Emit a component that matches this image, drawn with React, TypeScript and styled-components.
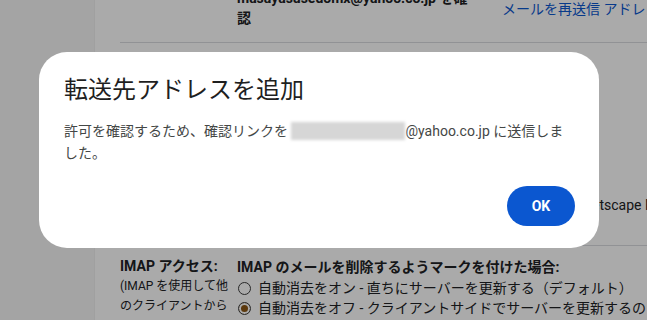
import React from 'react'
import styled, { createGlobalStyle } from 'styled-components'

const GlobalStyle = createGlobalStyle`
  html, body {
    margin: 0;
    padding: 0;
    width: 647px;
    height: 320px;
    overflow: hidden;
    background: #fff;
  }
  body {
    font-family: Roboto, "Noto Sans CJK JP", sans-serif;
    color: #1f1f1f;
  }
`

const Page = styled.div`
  display: flex;
  width: 647px;
  height: 320px;
  overflow: hidden;
`

const Nav = styled.nav`
  width: 94px;
  flex: none;
  background: #f7f7f7;
  border-right: 1px solid #f0f0f0;
`

const Content = styled.main`
  flex: 1;
  min-width: 0;
  padding-left: 25px;
  margin-top: -12px;
  font-size: 14px;
  line-height: 20px;
`

const Row = styled.div<{ $cols?: string }>`
  display: grid;
  grid-template-columns: ${(p) => p.$cols || '117px 1fr'};
  align-items: start;
`

const Strong = styled.div<{ $lh?: number }>`
  font-weight: 700;
  color: #202124;
  line-height: ${(p) => p.$lh || 20}px;
`

const Link = styled.a`
  color: #0b57d0;
  text-decoration: none;
  white-space: nowrap;
  padding-left: 25px;
  padding-top: 11px;
`

const Divider = styled.hr`
  margin: 0;
  border: 0;
  border-top: 1px solid #dadce0;
`

const Spacer = styled.div<{ $h: number }>`
  height: ${(p) => p.$h}px;
`

const Middle = styled.div`
  height: 202px;
  display: flex;
  flex-direction: column;
  justify-content: flex-end;
  padding-bottom: 30px;
  box-sizing: border-box;
  overflow: hidden;
`

const Plain = styled.div<{ $indent: number }>`
  white-space: nowrap;
  color: #202124;
  padding-left: ${(p) => p.$indent}px;
`

const Small = styled.div`
  font-size: 12px;
  line-height: 20px;
  color: #202124;
`

const Options = styled.div`
  display: flex;
  flex-direction: column;
`

const Option = styled.label`
  display: flex;
  align-items: center;
  gap: 7px;
  white-space: nowrap;
  height: 20px;
  color: #202124;
`

const Radio = styled.span<{ $checked?: boolean }>`
  width: 11px;
  height: 11px;
  margin-left: 1px;
  border-radius: 50%;
  border: 1.5px solid #3c3c3c;
  flex: none;
  box-sizing: content-box;
  background: ${(p) => (p.$checked ? '#fff' : 'transparent')};
  box-shadow: ${(p) => (p.$checked ? 'inset 0 0 0 2px #fff, inset 0 0 0 6px #8a5614' : 'none')};
`

const ImapSection = styled.div`
  padding-top: 10px;
`

const Overlay = styled.div`
  position: fixed;
  inset: 0;
  background: rgba(0, 0, 0, 0.335);
`

const Dialog = styled.div`
  position: absolute;
  left: 39px;
  top: 52px;
  width: 560px;
  box-sizing: border-box;
  background: #fff;
  border-radius: 28px;
  padding: 22px 24px 22px 25px;
  display: flex;
  flex-direction: column;
`

const Title = styled.h2`
  margin: 0 0 14px;
  font-size: 24px;
  line-height: 32px;
  font-weight: 400;
  color: #1f1f1f;
`

const Body = styled.p`
  margin: 0;
  font-size: 14px;
  line-height: 22px;
  color: #444746;
`

const Redacted = styled.span`
  display: inline-block;
  width: 114px;
  height: 18px;
  vertical-align: -4px;
  background: #d6d6d6;
  filter: blur(1.5px);
`

const Actions = styled.div`
  display: flex;
  justify-content: flex-end;
  margin-top: 22px;
`

const OkButton = styled.button`
  width: 68px;
  height: 40px;
  border: 0;
  border-radius: 20px;
  background: #0b57d0;
  color: #fff;
  font-family: Roboto, sans-serif;
  font-size: 14px;
  font-weight: 700;
`

export default function App() {
  return (
    <>
      <GlobalStyle />
      <Page>
        <Nav />
        <Content>
          <Row $cols="117px 240px auto">
            <div />
            <Strong>masayasusedomx@yahoo.co.jp を確認</Strong>
            <Link href="#">メールを再送信 アドレスを削除</Link>
          </Row>
          <Spacer $h={14} />
          <Divider />
          <Middle>
            <Plain $indent={462}>Netscape Mail など</Plain>
          </Middle>
          <Divider />
          <ImapSection>
            <Row>
              <div>
                <Strong>IMAP アクセス:</Strong>
                <Small>(IMAP を使用して他</Small>
                <Small>のクライアントから</Small>
              </div>
              <div>
                <Strong $lh={22}>IMAP のメールを削除するようマークを付けた場合:</Strong>
                <Options>
                  <Option>
                    <Radio />
                    自動消去をオン - 直ちにサーバーを更新する（デフォルト）
                  </Option>
                  <Option>
                    <Radio $checked />
                    自動消去をオフ - クライアントサイドでサーバーを更新するのを待つ
                  </Option>
                </Options>
              </div>
            </Row>
          </ImapSection>
        </Content>
      </Page>
      <Overlay>
        <Dialog>
          <Title>転送先アドレスを追加</Title>
          <Body>
            許可を確認するため、確認リンクを <Redacted />@yahoo.co.jp に送信しました。
          </Body>
          <Actions>
            <OkButton>OK</OkButton>
          </Actions>
        </Dialog>
      </Overlay>
    </>
  )
}
